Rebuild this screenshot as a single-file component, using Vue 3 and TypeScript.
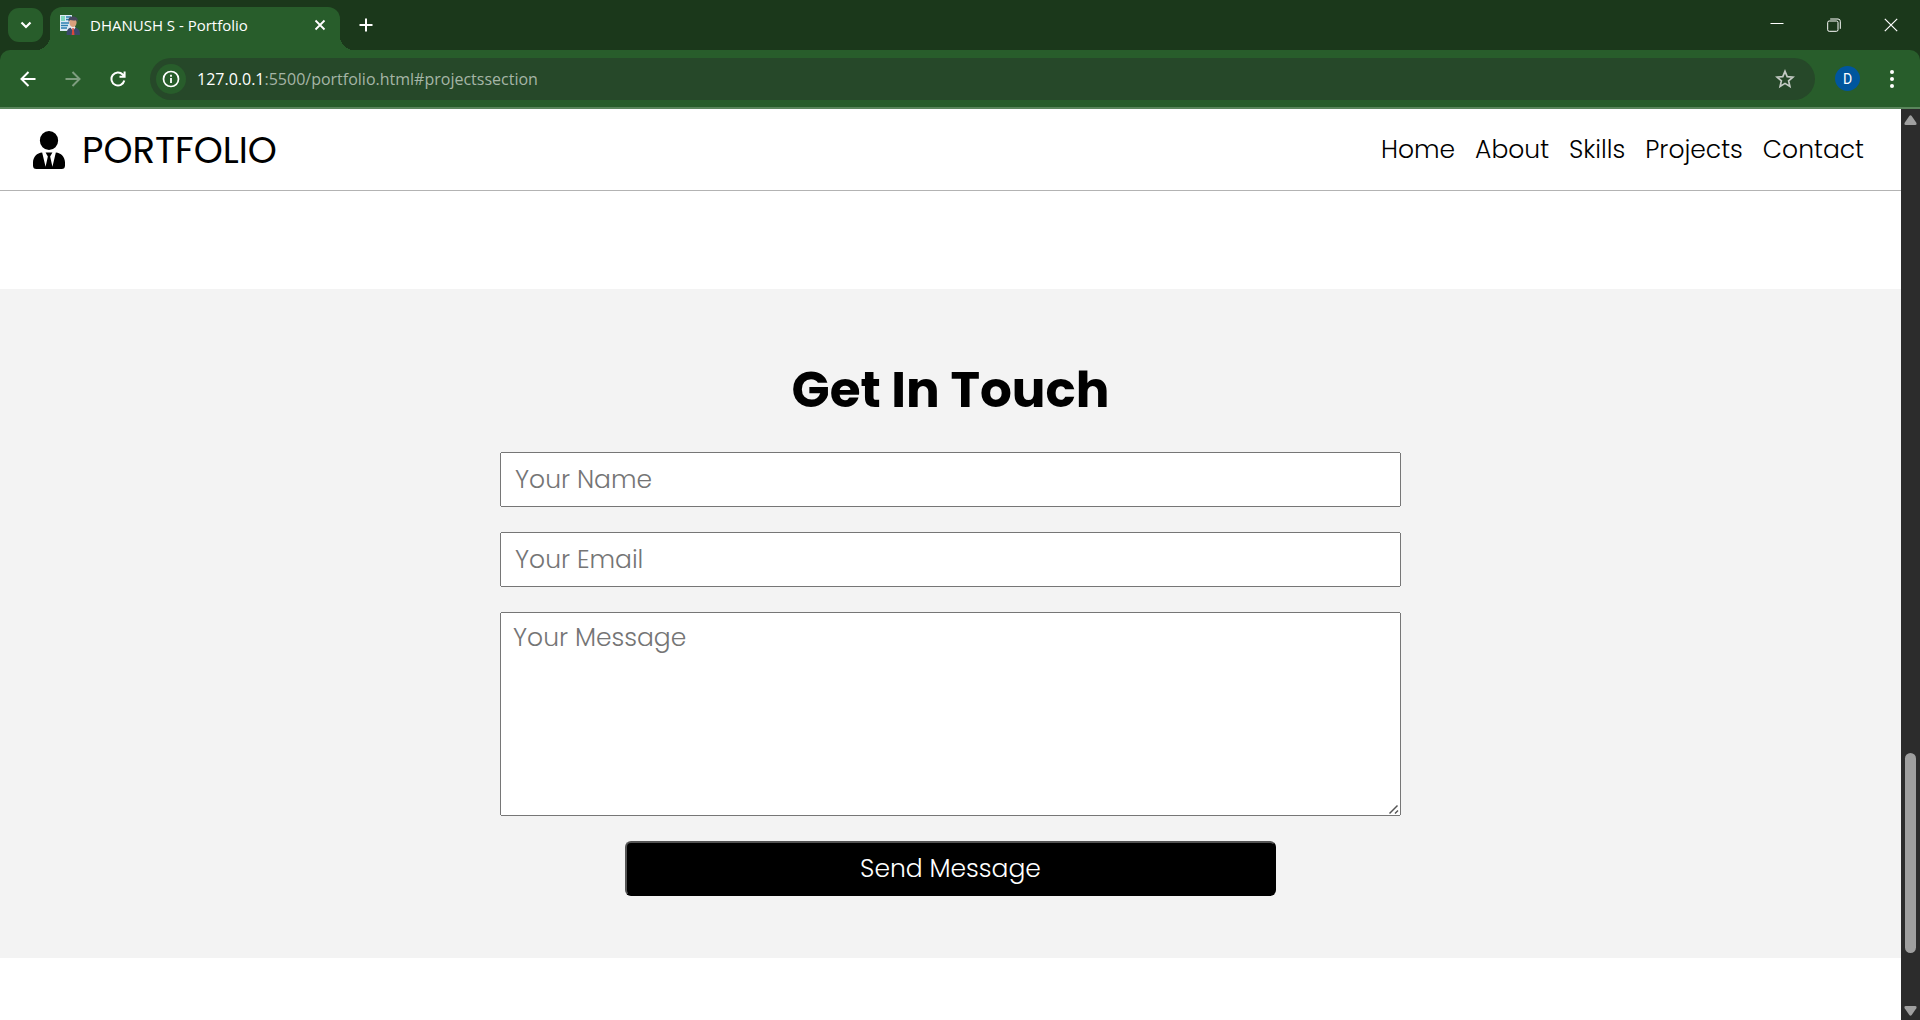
<script setup lang="ts">
import { ref } from 'vue'

interface NavLink {
  label: string
  target: string
}

const links: NavLink[] = [
  { label: 'Home', target: '#homesection' },
  { label: 'About', target: '#aboutsection' },
  { label: 'Skills', target: '#skillssection' },
  { label: 'Projects', target: '#projectssection' },
  { label: 'Contact', target: '#contactsection' },
]

const name = ref('')
const email = ref('')
const message = ref('')
</script>

<template>
  <div class="window">
    <header class="browser">
      <div class="tab-strip">
        <button class="tab-search" type="button" aria-label="Search tabs">
          <svg width="12" height="8" viewBox="0 0 12 8"><path d="M1.500 1.500 6 6l4.500-4.500" fill="none" stroke="#fff" stroke-width="2.200" /></svg>
        </button>
        <div class="tab">
          <svg class="favicon" width="20" height="20" viewBox="0 0 20 20">
            <path d="M0 0h12v16H0z" fill="#dceaf4" />
            <path d="M1 1h4v5H1z" fill="#7fd6bd" />
            <path d="M6 2h5M6 4.500h4M1 8h8M1 10.500h7M1 13h6" stroke="#2b7fb0" stroke-width="1.300" />
            <path d="M6.500 20c0-4 1-6 3.500-7.200h6c3 1.200 4 3.200 4 7.200z" fill="#3b4a6b" />
            <path d="m10.500 12.500 2.500 3.500 2.500-3.500-1-2h-3z" fill="#f1efee" />
            <path d="m12.300 13.500.7-.8.8.8.700 6.500h-2.800z" fill="#d9483b" />
            <ellipse cx="13" cy="7.500" rx="3.600" ry="4.600" fill="#d9a07c" />
            <path d="M8.700 7C7.700 3 10 1.500 13 1.500c4 0 5.500 2.500 4.500 5.500l-1-1.700c-3 .3-5 .2-6.500-.3z" fill="#46485c" />
          </svg>
          <span class="tab-title">DHANUSH S - Portfolio</span>
          <button class="plain tab-close" type="button" aria-label="Close tab">
            <svg width="12" height="12" viewBox="0 0 12 12"><path d="m1.500 1.500 9 9m0-9-9 9" stroke="#fff" stroke-width="1.800" /></svg>
          </button>
        </div>
        <button class="plain new-tab" type="button" aria-label="New tab">
          <svg width="14" height="14" viewBox="0 0 14 14"><path d="M7 .5v13M.5 7h13" stroke="#fff" stroke-width="2" /></svg>
        </button>
        <div class="window-controls">
          <button class="plain" type="button" aria-label="Minimize">
            <svg width="14" height="14" viewBox="0 0 14 14"><path d="M.5 5.500h13" stroke="#fff" /></svg>
          </button>
          <button class="plain" type="button" aria-label="Restore">
            <svg width="14" height="14" viewBox="0 0 14 14" fill="none" stroke="#fff"><rect x=".7" y="3" width="10.300" height="10.300" rx="1.500" /><path d="M3.200 1H11q2.300 0 2.300 2.300v7.500" /></svg>
          </button>
          <button class="plain" type="button" aria-label="Close">
            <svg width="14" height="14" viewBox="0 0 14 14"><path d="m.8.800 12.400 12.400m0-12.400L.8 13.200" stroke="#fff" stroke-width="1.200" /></svg>
          </button>
        </div>
      </div>

      <div class="toolbar">
        <div class="history">
          <button class="plain" type="button" aria-label="Back">
            <svg width="16" height="16" viewBox="0 0 16 16"><path d="M15.500 8H2M8.500 1 1.500 8l7 7" fill="none" stroke="#fff" stroke-width="2" /></svg>
          </button>
          <button class="plain" type="button" aria-label="Forward" disabled>
            <svg width="16" height="16" viewBox="0 0 16 16"><path d="M.5 8H14M7.500 1l7 7-7 7" fill="none" stroke="#7e9d7f" stroke-width="2" /></svg>
          </button>
          <button class="plain" type="button" aria-label="Reload">
            <svg width="16" height="16" viewBox="0 0 16 16"><path d="M14.300 9.500A6.500 6.500 0 1 1 12.700 3.500l1.500 1.700M14.600.5v5.300H9.500" fill="none" stroke="#fff" stroke-width="2" /></svg>
          </button>
        </div>
        <div class="omnibox">
          <button class="site-info" type="button" aria-label="View site information">
            <svg width="18" height="18" viewBox="0 0 18 18"><circle cx="9" cy="9" r="7.500" fill="none" stroke="#fff" stroke-width="1.700" /><path d="M9 8v5M9 4.800v1.900" stroke="#fff" stroke-width="1.800" /></svg>
          </button>
          <span class="address"><span class="host">127.0.0.1</span>:5500/portfolio.html#projectssection</span>
          <button class="plain star" type="button" aria-label="Bookmark this tab">
            <svg width="20" height="20" viewBox="0 0 20 20"><path d="m10 2.300 2.200 5.300 5.700.5-4.300 3.700 1.300 5.600-4.900-3-4.900 3 1.300-5.600L2.100 8.100l5.700-.5z" fill="none" stroke="#c3cac3" stroke-width="1.700" /></svg>
          </button>
        </div>
        <button class="avatar" type="button" aria-label="Profile">D</button>
        <button class="plain menu" type="button" aria-label="Browser menu">
          <svg width="4" height="18" viewBox="0 0 4 18" fill="#fff"><circle cx="2" cy="2" r="2" /><circle cx="2" cy="9" r="2" /><circle cx="2" cy="16" r="2" /></svg>
        </button>
      </div>
    </header>

    <div class="viewport">
      <div class="page">
        <nav class="navbar">
          <a class="brand" href="#homesection">
            <svg width="32" height="38" viewBox="0 0 448 512" preserveAspectRatio="none">
              <path d="M224 256a128 128 0 1 0 0-256 128 128 0 0 0 0 256zm95.800 32.600L272 480l-32-136 32-56h-96l32 56-32 136-47.800-191.400C56.900 292 0 350.300 0 422.400V464a48 48 0 0 0 48 48h352a48 48 0 0 0 48-48v-41.600c0-72.100-56.900-130.400-128.200-133.800z" />
            </svg>
            <span>PORTFOLIO</span>
          </a>
          <ul class="links">
            <li v-for="link in links" :key="link.label"><a :href="link.target">{{ link.label }}</a></li>
          </ul>
        </nav>
        <main>
          <section id="contactsection" class="contact">
            <h1>Get In Touch</h1>
            <form class="contact-form" @submit.prevent>
              <input v-model="name" type="text" placeholder="Your Name" aria-label="Your Name" />
              <input v-model="email" type="email" placeholder="Your Email" aria-label="Your Email" />
              <textarea v-model="message" placeholder="Your Message" aria-label="Your Message"></textarea>
              <button class="send" type="submit">Send Message</button>
            </form>
          </section>
        </main>
      </div>
      <div class="scrollbar" aria-hidden="true">
        <svg width="13" height="10" viewBox="0 0 13 10"><path d="M5.300 1Q6.500-.6 7.700 1l4.600 6.700Q13.300 10 11 10H2Q-.3 10 .7 7.700z" fill="#9f9f9f" /></svg>
        <div class="track"><div class="thumb"></div></div>
        <svg width="13" height="10" viewBox="0 0 13 10"><path d="M5.300 9Q6.500 10.600 7.700 9l4.600-6.700Q13.300 0 11 0H2Q-.3 0 .7 2.300z" fill="#9f9f9f" /></svg>
      </div>
    </div>
  </div>
</template>

<style>
body {
  margin: 0;
}
</style>

<style scoped>
* {
  box-sizing: border-box;
}

svg {
  display: block;
}

.window {
  display: flex;
  flex-direction: column;
  height: 100vh;
  overflow: hidden;
  background: #fff;
}

button {
  padding: 0;
  border: 0;
}

.plain {
  display: grid;
  place-items: center;
  flex: none;
  background: none;
}

/* Browser frame */
.browser {
  flex: none;
  background: #1b381b;
  color: #fff;
  font-family: "Segoe UI", "Open Sans", "Noto Sans", sans-serif;
}

.tab-strip {
  display: flex;
  align-items: center;
  height: 50px;
  padding-left: 8px;
}

.tab-search {
  display: grid;
  place-items: center;
  width: 35px;
  height: 34px;
  border-radius: 11px;
  background: #285d2b;
}

.tab {
  position: relative;
  display: flex;
  align-items: center;
  align-self: flex-end;
  width: 290px;
  height: 43px;
  margin-left: 7px;
  padding: 0 14px 7px 10px;
  border-radius: 12px 12px 0 0;
  background: #285d2b;
}

.tab::before,
.tab::after {
  content: "";
  position: absolute;
  bottom: 0;
  width: 14px;
  height: 14px;
}

.tab::before {
  right: 100%;
  background: radial-gradient(circle at 0 0, transparent 14px, #285d2b 14px);
}

.tab::after {
  left: 100%;
  background: radial-gradient(circle at 100% 0, transparent 14px, #285d2b 14px);
}

.tab-title {
  flex: 1;
  margin-left: 10px;
  font-size: 15px;
  line-height: 20px;
  white-space: nowrap;
}

.new-tab {
  margin-left: 19px;
}

.window-controls {
  display: flex;
  gap: 43px;
  margin-left: auto;
  padding-right: 22px;
}

.toolbar {
  display: flex;
  align-items: center;
  height: 59px;
  padding: 0 26px 0 20px;
  border-bottom: 2px solid #5a865c;
  border-radius: 10px 10px 0 0;
  background: #285d2b;
}

.history {
  display: flex;
  gap: 29px;
}

.omnibox {
  display: flex;
  align-items: center;
  flex: 1;
  height: 42px;
  margin-left: 24px;
  padding: 0 20px 0 6px;
  border-radius: 21px;
  background: #264829;
}

.site-info {
  display: grid;
  place-items: center;
  width: 30px;
  height: 30px;
  border-radius: 50%;
  background: #285d2b;
}

.address {
  flex: 1;
  margin-left: 11px;
  color: #a5b5a6;
  font-size: 16px;
  line-height: 24px;
}

.host {
  color: #fff;
}

.avatar {
  width: 25px;
  height: 25px;
  margin-left: 20px;
  border-radius: 50%;
  background: #00569e;
  color: #fff;
  font-family: Roboto, sans-serif;
  font-size: 14px;
}

.menu {
  margin-left: 30px;
}

/* Page */
.viewport {
  display: flex;
  flex: 1;
  min-height: 0;
}

.page {
  flex: 1;
  overflow: hidden;
  color: #000;
  font-family: Poppins, Inter, sans-serif;
  font-weight: 300;
}

.navbar {
  display: flex;
  align-items: center;
  justify-content: space-between;
  height: 82px;
  padding: 0 37px 0 33px;
  border-bottom: 1px solid #b3b3b3;
}

.navbar a {
  color: #000;
  text-decoration: none;
}

.brand {
  display: flex;
  align-items: center;
  gap: 17px;
  font-size: 37px;
  font-weight: 400;
}

.links {
  display: flex;
  gap: 20px;
  margin: 0;
  padding: 0;
  list-style: none;
  font-size: 25px;
}

.contact {
  display: flex;
  flex-direction: column;
  align-items: center;
  margin-top: 98px;
  padding: 63px 24px 62px;
  background: #f3f3f3;
}

h1 {
  margin: 0 0 25px;
  font-size: 50px;
  font-weight: 700;
  line-height: 75px;
}

.contact-form {
  display: flex;
  flex-direction: column;
  align-items: center;
  gap: 25px;
  width: 100%;
  max-width: 901px;
}

input,
textarea {
  width: 100%;
  color: #000;
  font: inherit;
  font-size: 25px;
  outline: none;
}

input {
  height: 55px;
  padding: 0 13px;
}

textarea {
  height: 204px;
  padding: 6px 12px;
  line-height: 38px;
  resize: both;
}

textarea::-webkit-resizer {
  background: url("data:image/svg+xml,%3Csvg xmlns='http://www.w3.org/2000/svg' width='15' height='15'%3E%3Cpath d='M4.500 13.500l8-8M10 13.500l3-3' stroke='%23555' stroke-width='1.500' fill='none'/%3E%3C/svg%3E") no-repeat right bottom;
}

input::placeholder,
textarea::placeholder {
  color: #757575;
}

.send {
  width: 100%;
  max-width: 651px;
  height: 55px;
  border: 2px outset #000;
  border-radius: 6px;
  background: #000;
  color: #fff;
  font: inherit;
  font-size: 25px;
}

/* Page scrollbar */
.scrollbar {
  display: flex;
  flex-direction: column;
  align-items: center;
  flex: none;
  width: 19px;
  padding: 6px 0 4px;
  background: #2c2c2c;
}

.track {
  display: flex;
  flex-direction: column;
  justify-content: flex-end;
  flex: 1;
  width: 11px;
  padding-bottom: 53px;
}

.thumb {
  height: 200px;
  border-radius: 6px;
  background: #9f9f9f;
}
</style>
